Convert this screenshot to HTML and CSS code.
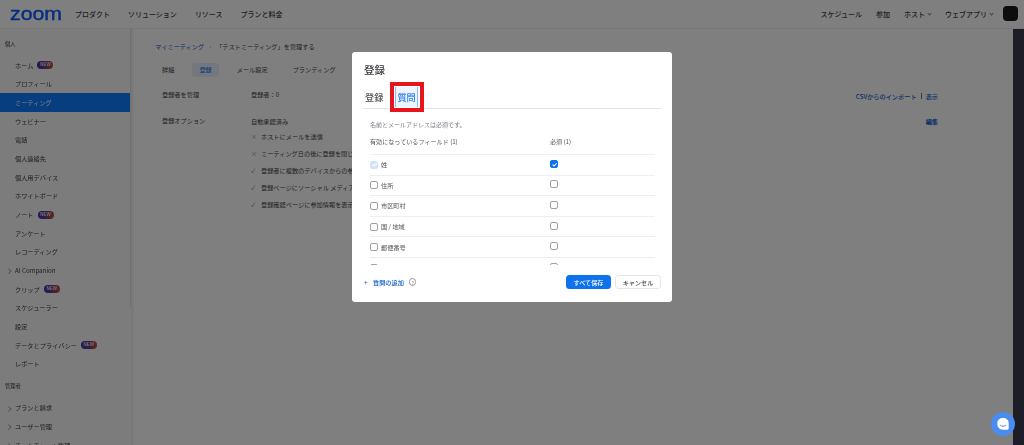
FILE: index.html
```html
<!DOCTYPE html>
<html lang="ja">
<head>
<meta charset="utf-8">
<title>登録</title>
<link rel="stylesheet" href="styles.css">
</head>
<body>
<div class="page">
  <header class="topbar">
    <div class="logo">zoom</div>
    <nav class="topnav">
      <span>プロダクト</span><span>ソリューション</span><span>リソース</span><span>プランと料金</span>
    </nav>
    <nav class="topnav right">
      <span>スケジュール</span><span>参加</span><span>ホスト<i class="caret"></i></span><span>ウェブアプリ<i class="caret"></i></span>
      <b class="avatar"></b>
    </nav>
  </header>
  <div class="body">
    <aside class="sidebar">
      <div class="scrollthumb"></div>
      <div class="section">個人</div>
      <a class="item">ホーム<em class="new">NEW</em></a>
      <a class="item">プロフィール</a>
      <a class="item active">ミーティング</a>
      <a class="item">ウェビナー</a>
      <a class="item">電話</a>
      <a class="item">個人連絡先</a>
      <a class="item">個人用デバイス</a>
      <a class="item">ホワイトボード</a>
      <a class="item">ノート<em class="new">NEW</em></a>
      <a class="item">アンケート</a>
      <a class="item">レコーディング</a>
      <a class="item arrow">AI Companion</a>
      <a class="item">クリップ<em class="new">NEW</em></a>
      <a class="item">スケジューラー</a>
      <a class="item">設定</a>
      <a class="item">データとプライバシー<em class="new">NEW</em></a>
      <a class="item">レポート</a>
      <div class="section admin">管理者</div>
      <a class="item arrow">プランと請求</a>
      <a class="item arrow">ユーザー管理</a>
      <a class="item arrow">チームチャット管理</a>
    </aside>
    <main class="content">
      <div class="crumb"><span class="link">マイミーティング</span><span class="sep">›</span><span>「テストミーティング」を管理する</span></div>
      <div class="tabs"><span>詳細</span><span class="on">登録</span><span>メール設定</span><span>ブランディング</span></div>
      <div class="row first">
        <div class="label">登録者を管理</div>
        <div class="val">登録者：0</div>
        <div class="actions"><span class="link">CSVからのインポート</span><i class="bar"></i><span class="link">表示</span></div>
      </div>
      <div class="row second">
        <div class="label">登録オプション</div>
        <div class="val">
          <div class="opt-head">自動承認済み</div>
          <div class="opt"><i class="x">×</i>ホストにメールを送信</div>
          <div class="opt"><i class="x">×</i>ミーティング日の後に登録を閉じる</div>
          <div class="opt"><i class="c">✓</i>登録者に複数のデバイスからの参加を許可</div>
          <div class="opt"><i class="c">✓</i>登録ページにソーシャル メディア共有ボタンを表示</div>
          <div class="opt"><i class="c">✓</i>登録確認ページに参加情報を表示</div>
        </div>
        <div class="actions"><span class="link strong">編集</span></div>
      </div>
    </main>
    <div class="strip"></div>
  </div>
</div>

<div class="overlay"></div>

<section class="modal">
  <h2 class="title">登録</h2>
  <div class="mtabs">
    <span>登録</span>
    <span class="sel"><span class="hl">質問</span></span>
  </div>
  <p class="note">名前とメールアドレスは必須です。</p>
  <div class="cols"><span class="c1">有効になっているフィールド (1)</span><span class="c2">必須 (1)</span></div>
  <div class="list">
    <div class="frow"><span class="c1"><i class="box dis"><svg viewBox="0 0 8 8"><path d="M1.800 4.200l1.600 1.600 3-3.200"/></svg></i>姓</span><span class="c2"><i class="box chk"><svg viewBox="0 0 8 8"><path d="M1.800 4.200l1.600 1.600 3-3.200"/></svg></i></span></div>
    <div class="frow"><span class="c1"><i class="box"></i>住所</span><span class="c2"><i class="box"></i></span></div>
    <div class="frow"><span class="c1"><i class="box"></i>市区町村</span><span class="c2"><i class="box"></i></span></div>
    <div class="frow"><span class="c1"><i class="box"></i>国 / 地域</span><span class="c2"><i class="box"></i></span></div>
    <div class="frow"><span class="c1"><i class="box"></i>郵便番号</span><span class="c2"><i class="box"></i></span></div>
    <div class="frow"><span class="c1"><i class="box"></i>電話番号</span><span class="c2"><i class="box"></i></span></div>
  </div>
  <div class="mfoot">
    <span class="add"><b>+</b>質問の追加<i class="help">?</i></span>
    <span class="btns"><button class="primary">すべて保存</button><button class="ghost">キャンセル</button></span>
  </div>
  <div class="redbox"></div>
</section>

<div class="chat">
  <svg viewBox="0 0 24 24" width="16" height="16"><path d="M12 3c5 0 8.500 3 8.500 7.500v8.200c0 1-.8 1.800-1.800 1.800H12c-5 0-8.500-3.800-8.500-8.500V10.500C3.500 6 7 3 12 3z" fill="#fff"/><path d="M8 14c2 2 6 2 8 0" fill="none" stroke="#4a8cf0" stroke-width="1.500" stroke-linecap="round"/></svg>
</div>
</body>
</html>
```
FILE: styles.css
```css
* { box-sizing: border-box; }
html, body { margin: 0; height: 100%; overflow: hidden; }
body {
  width: 1024px; height: 445px;
  font-family: "Noto Sans CJK JP", "Noto Sans", sans-serif;
  color: #333;
  background: #fff;
  filter: blur(0.4px);
}
i, em { font-style: normal; }

.page { height: 445px; display: flex; flex-direction: column; overflow: hidden; }

.topbar {
  height: 29px; flex: none;
  display: flex; align-items: center;
  padding: 0 6px 1px 10px;
  background: #fff;
  border-bottom: 1px solid #f0f0f0;
}
.logo {
  width: 60px; margin-right: 5px;
  font: 400 19px/20px "Liberation Sans", sans-serif;
  color: #0b5cff;
  -webkit-text-stroke: .4px #0b5cff;
  transform: scaleX(1.12);
  transform-origin: left center;
}
.topnav { display: flex; gap: 18px; font-size: 7px; font-weight: 500; color: #3c3c48; }
.topnav.right { margin-left: auto; gap: 14px; align-items: center; }
.caret {
  display: inline-block; width: 3px; height: 3px; margin: 0 0 2px 3px;
  border-right: 1px solid #888; border-bottom: 1px solid #888;
  transform: rotate(45deg);
}
.avatar { width: 15px; height: 15px; border-radius: 4px; background: #1a1a1a; margin-left: -4px; }

.body { flex: 1; display: flex; min-height: 0; }

.sidebar {
  position: relative;
  width: 133px; flex: none;
  padding-top: 10px;
  background: #f9f9f9;
  border-right: 2px solid #f0f0f0;
  box-shadow: 1px 0 2px rgba(0,0,0,.04);
  overflow: hidden;
}
.scrollthumb { position: absolute; right: -1px; top: 0; width: 2px; height: 278px; background: #e0e0e0; }
.section { height: 11px; padding-left: 5px; font-size: 5.300px; line-height: 11px; color: #333; }
.section.admin { margin-top: 6px; margin-bottom: 5.500px; height: 14px; line-height: 14px; }
.item {
  display: flex; align-items: center;
  height: 18.670px;
  padding-left: 15px;
  font-size: 6.200px;
  color: #3a3a46;
  white-space: nowrap;
}
.section + .item { margin-top: 6px; }
.section.admin + .item { margin-top: 0; }
.item.active { color: #fff; background: #0e7cff; }
.item.arrow { position: relative; }
.item.arrow::before {
  content: ""; position: absolute; left: 7px; top: 8px;
  width: 2.500px; height: 2.500px;
  border-top: .7px solid #aaa; border-right: .7px solid #aaa;
  transform: rotate(45deg);
}
.new {
  display: inline-flex; align-items: center; justify-content: center;
  width: 16px; height: 8px; margin-left: 4px;
  border-radius: 4px;
  font: 700 4.500px/8px "Liberation Sans", sans-serif;
  color: #ddd;
  background: linear-gradient(90deg, #4030b0, #6a3a90 50%, #d0501a);
}

.content { flex: 1; min-width: 0; padding: 12px 0 0 22px; background: #fff; font-size: 6.200px; color: #444; }
.crumb { display: flex; gap: 5px; height: 12px; line-height: 12px; }
.crumb .sep { color: #888; }
.link { color: #0b5cc8; }
.strong { font-weight: 700; }
.tabs { display: flex; gap: 25px; margin-top: 10px; margin-left: 7px; height: 14px; line-height: 14px; align-items: center; }
.tabs .on { color: #0b6cf0; background: #e8f0fc; border-radius: 3px; padding: 0 7px; margin: 0 -7px; }
.row { display: flex; margin-left: 7px; padding-right: 75px; }
.row.first { margin-top: 12px; height: 26.500px; line-height: 11px; }
.label { width: 89px; flex: none; }
.val { flex: 1; }
.actions { display: flex; align-items: flex-start; gap: 4px; font-weight: 500; margin-top: 1.500px; }
.bar { width: 1px; height: 6px; margin-top: 2px; background: #777; }
.opt-head { height: 12px; line-height: 11px; }
.opt { height: 17px; line-height: 17px; white-space: nowrap; }
.opt i { display: inline-block; width: 10px; }
.x { color: #888; }
.c { color: #1f9d4d; }

.strip { width: 11px; flex: none; background: #3a3a4e; }

.overlay { position: fixed; inset: 0; background: rgba(0,0,0,.5); }

.modal {
  position: fixed; left: 352px; top: 52px;
  width: 320px; height: 250px;
  padding: 0 11px;
  background: #fff;
  border-radius: 3px;
  overflow: hidden;
}
.title { margin: 0; height: 37px; padding: 11px 0 0 1px; font-size: 10.500px; line-height: 14px; font-weight: 500; color: #33333d; }
.mtabs {
  display: flex; gap: 14px; height: 20px;
  padding-left: 2px;
  border-bottom: 1px solid #e4e4ea;
  font-size: 9.200px; line-height: 17px; font-weight: 500; color: #555;
}
.sel { color: #2b7ff0; }
.hl {
  display: inline-block; height: 20px; margin: -2px -2px 0;
  padding: 0 1px; line-height: 21px;
  background: #eef4ff;
  border-left: 1px solid #8cb8f8; border-right: 1px solid #8cb8f8;
}
.note { margin: 12px 0 0 7px; height: 8px; font-size: 6px; line-height: 8px; color: #7a7a85; }
.cols { display: flex; margin: 8px 0 0 7px; height: 17px; font-size: 6.100px; line-height: 9px; color: #555; }
.c1 { width: 180px; flex: none; display: flex; align-items: center; }
.cols .c1 { display: block; }
.list { height: 111px; margin: 0 6px 0 7px; overflow: hidden; border-top: 1px solid #f0f0f3; }
.frow {
  display: flex; align-items: center; height: 20.600px;
  border-bottom: 1px solid #eeeef1;
  font-size: 6.200px; color: #555;
}
.box {
  display: inline-flex; align-items: center; justify-content: center;
  width: 8px; height: 8px; margin-right: 3px;
  border: 1px solid #a0a0a8; border-radius: 2px; background: #fff;
}
.box svg { width: 7px; height: 7px; fill: none; stroke: #fff; stroke-width: 1.200; flex: none; }
.box.chk { background: #0e72ed; border-color: #0e72ed; }
.box.dis { background: #d5e3fa; border-color: #d5e3fa; }
.mfoot { display: flex; align-items: center; justify-content: space-between; height: 34px; }
.add { display: inline-flex; align-items: center; font-size: 6.200px; font-weight: 500; color: #0b5cc8; }
.add b { width: 10px; font-weight: 500; padding-left: 1px; }
.help {
  display: inline-flex; align-items: center; justify-content: center;
  width: 7.500px; height: 7.500px; margin-left: 5px;
  border: 1px solid #999; border-radius: 50%;
  font-size: 5px; font-weight: 400; color: #777;
}
.btns { display: flex; gap: 4px; }
button { height: 14px; padding: 0; font: 500 6.100px "Noto Sans CJK JP", sans-serif; border-radius: 3.500px; }
.primary { width: 45px; border: 0; background: #0e72ed; color: #fff; }
.ghost { width: 46px; border: 1px solid #e6e6ea; background: #fff; color: #444; }
.redbox {
  position: absolute; left: 38px; top: 30px;
  width: 34px; height: 30px;
  border: 4px solid #e8141c;
}
.chat {
  position: fixed; left: 991px; top: 412px;
  width: 24px; height: 24px; border-radius: 50%;
  display: flex; align-items: center; justify-content: center;
  background: #4a8cf0;
}
```
